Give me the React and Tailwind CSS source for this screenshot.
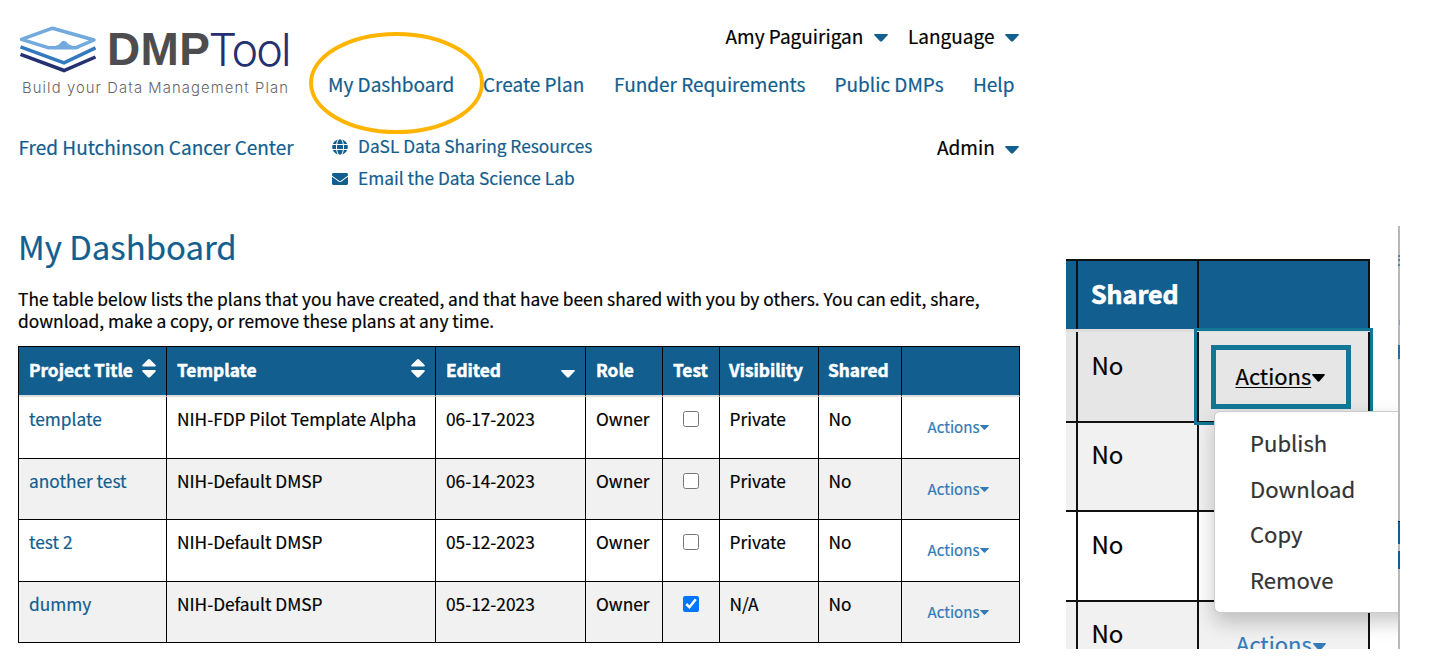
import React from "react";
import { FaGlobe, FaEnvelope } from "react-icons/fa";

function Caret({ className }) {
  return (
    <svg viewBox="0 0 14 9" preserveAspectRatio="none" className={className} fill="currentColor">
      <path d="M.8 0H13.2Q14.3.4 13.6 1.5L8 8.2Q7 9.2 6 8.2L.4 1.5Q-.3.4.8 0Z" />
    </svg>
  );
}

function Sort() {
  return (
    <svg viewBox="0 0 14 19" className="mt-px h-[19px] w-[14px] shrink-0" fill="currentColor">
      <path d="M7 0Q7.5 0 8 .5L13.6 6Q14.2 7.5 13 7.5H1Q-.2 7.5.4 6L6 .5Q6.500 0 7 0ZM1 11H13Q14.200 11 13.600 12.500L8 18.300Q7 19.200 6 18.300L.4 12.500Q-.2 11 1 11Z" />
    </svg>
  );
}

function Logo() {
  return (
    <div className="h-[90px] w-[310px] pt-[14px] pl-[19px]">
      <div className="flex h-[50px]">
        <svg viewBox="0 0 78 48" className="h-[48px] w-[78px] shrink-0" fill="none">
          <path d="M1.500 28.300 45 44.500 76.500 31" stroke="#24306f" strokeWidth="3.500" />
          <path d="M1.500 20.800 45 36.800 76.500 21.800" stroke="#3478bf" strokeWidth="3.500" />
          <path d="M2.500 13.300 33.500 2.200 75 14 57 21.700H29Z" stroke="#72aadd" strokeWidth="3.500" strokeLinejoin="round" />
          <path d="M27 22.500Q35 21 40 18.500 45 11 49.500 18.300 53 19.500 60 22.500V23H28Z" fill="#72aadd" />
        </svg>
        <div className="flex pl-[10px] text-[45px] leading-[47px] whitespace-nowrap">
          <span className="w-[101.500px] font-['Liberation_Sans',sans-serif] text-[46px] font-bold tracking-[0.300px] text-[#4d4d4f]">DMP</span>
          <span className="font-[Inter,sans-serif] font-light tracking-[-2px] text-[#24306f]">Tool</span>
        </div>
      </div>
      <div className="mt-[3px] pl-[3px] font-[Inter,sans-serif] text-[14.800px] font-light leading-[18px] tracking-[1.100px] whitespace-nowrap text-[#666666]">
        Build your Data Management Plan
      </div>
    </div>
  );
}

const plans = [
  ["template", "NIH-FDP Pilot Template Alpha", "06-17-2023", false, "Private", "h-[62px]"],
  ["another test", "NIH-Default DMSP", "06-14-2023", false, "Private", "h-[61px] bg-[#f1f1f1]"],
  ["test 2", "NIH-Default DMSP", "05-12-2023", false, "Private", "h-[62px]"],
  ["dummy", "NIH-Default DMSP", "05-12-2023", true, "N/A", "h-[61px] bg-[#f1f1f1]"],
];

const th = "border-r border-b-2 border-r-black border-b-[#dddddd] p-0 pl-[10px] pt-[11px] align-top text-left font-bold [-webkit-text-stroke:0.5px]";
const td = "border-r border-b border-black p-0 pl-[10px] pt-[10px] align-top";
const tdTight = "border-r border-b border-black p-0 pl-[9.500px] pt-[10px] align-top";

function PlansTable() {
  return (
    <table className="w-[1002px] table-fixed border-separate border-spacing-0 border-t border-l border-black text-[17.300px] leading-[24px] whitespace-nowrap">
      <colgroup>
        <col className="w-[148px]" />
        <col className="w-[269px]" />
        <col className="w-[150px]" />
        <col className="w-[77px]" />
        <col className="w-[57px]" />
        <col className="w-[99px]" />
        <col className="w-[83px]" />
        <col className="w-[118px]" />
      </colgroup>
      <thead className="bg-[#115e8f] text-white">
        <tr className="h-[50px]">
          <th className={th}>
            <div className="flex justify-between pr-[10px]">Project Title<Sort /></div>
          </th>
          <th className={th}>
            <div className="flex justify-between pr-[10px]">Template<Sort /></div>
          </th>
          <th className={th}>
            <div className="flex justify-between pr-[10px]">Edited<Caret className="mt-[12px] h-[8px] w-[14px]" /></div>
          </th>
          <th className={th}>Role</th>
          <th className={th}>Test</th>
          <th className={th}><span className="-ml-px">Visibility</span></th>
          <th className={th}><span className="-ml-px">Shared</span></th>
          <th className={th}></th>
        </tr>
      </thead>
      <tbody>
        {plans.map(([title, template, edited, test, visibility, row]) => (
          <tr key={title} className={row}>
            <td className={td}><a className="text-[#115e8f]">{title}</a></td>
            <td className={td}>{template}</td>
            <td className={td}>{edited}</td>
            <td className={td}>Owner</td>
            <td className="border-r border-b border-black p-0 pl-[20px] pt-[14px] align-top">
              <input type="checkbox" defaultChecked={test} className="block h-[16px] w-[16px]" />
            </td>
            <td className={tdTight}>{visibility}</td>
            <td className={tdTight}>No</td>
            <td className="border-r border-b border-black p-0 pl-[25.500px] pt-[17px] align-top text-[15.100px] text-[#337ab7]">
              <div className="flex items-center">Actions<Caret className="mt-[3px] ml-px h-[5px] w-[9px]" /></div>
            </td>
          </tr>
        ))}
      </tbody>
    </table>
  );
}

const cell = "border-r-2 border-b-2 border-[#111111] shrink-0";

function Detail() {
  return (
    <div className="relative mt-[226px] ml-[46px] flex h-[423px] w-[334px] shrink-0 overflow-hidden text-[24px] leading-[32px] [-webkit-text-stroke:0.2px]">
      <div className="flex w-[304px] shrink-0 flex-col pt-[33px]">
        <div className="flex h-[73px] shrink-0 border-t-2 border-b-[3px] border-t-[#111111] border-b-[#dddddd] bg-[#115e8f] font-bold text-white">
          <div className="w-[12px] border-r-2 border-[#111111]"></div>
          <div className="w-[121px] border-r-2 border-[#111111] pt-[16px] pl-[13px] text-[25px] [-webkit-text-stroke:0.7px]">Shared</div>
          <div className="w-[171px] border-r-2 border-[#111111]"></div>
        </div>
        <div className="flex h-[91px] shrink-0 bg-[#e6e6e6]">
          <div className={cell + " w-[12px]"}></div>
          <div className={cell + " w-[121px] pt-[17px] pl-[13.500px]"}>No</div>
          <div className={cell + " w-[171px]"}></div>
        </div>
        <div className="flex h-[89px] shrink-0 bg-[#f1f1f1]">
          <div className={cell + " w-[12px]"}></div>
          <div className={cell + " w-[121px] pt-[15px] pl-[13.500px]"}>No</div>
          <div className={cell + " w-[171px]"}></div>
        </div>
        <div className="flex h-[90px] shrink-0">
          <div className={cell + " w-[12px]"}></div>
          <div className={cell + " w-[121px] pt-[16px] pl-[13.500px]"}>No</div>
          <div className={cell + " w-[171px]"}></div>
        </div>
        <div className="flex h-[90px] shrink-0 bg-[#f1f1f1]">
          <div className={cell + " w-[12px]"}></div>
          <div className={cell + " w-[121px] pt-[15px] pl-[13.500px]"}>No</div>
          <div className={cell + " flex w-[171px] pt-[25px] pl-[37px] text-[22px] text-[#337ab7]"}>
            Actions<Caret className="mt-[16px] ml-px h-[8px] w-[13px]" />
          </div>
        </div>
      </div>
      <div className="absolute top-[102px] left-[128px] h-[97px] w-[179px] border-[3px] border-[#127796]"></div>
      <div className="absolute top-[119px] left-[145px] flex h-[64px] w-[140px] border-[5px] border-[#127796] pt-[9px] pl-[19.500px] text-[22px]">
        <span className="h-[27px] leading-[32px] underline decoration-1 underline-offset-[2px]">Actions</span>
        <Caret className="mt-[15px] ml-px h-[8px] w-[13px]" />
      </div>
      <div className="absolute top-[185px] left-[148px] h-[202px] w-[220px] rounded-[6px] border border-black/20 bg-white pt-[8px] pl-[35px] text-[22.100px] leading-[45.600px] text-[#333333] shadow-[0_9px_20px_rgba(0,0,0,0.22)]">
        <div>Publish</div>
        <div>Download</div>
        <div>Copy</div>
        <div>Remove</div>
      </div>
      <div className="absolute top-0 right-0 flex h-[423px] w-[2px] flex-col bg-[#b8b8b8]">
        <div className="mt-[29px] h-[2px] shrink-0 bg-[#4f86a9]"></div>
        <div className="mt-[2px] h-[2px] shrink-0 bg-[#4f86a9]"></div>
        <div className="mt-[3px] h-[2px] shrink-0 bg-[#4f86a9]"></div>
        <div className="mt-[54px] ml-px h-[5px] shrink-0 bg-[#7fa3ba]"></div>
        <div className="mt-[20px] h-[14px] shrink-0 bg-[#2c6c97]"></div>
        <div className="mt-[162px] h-[1px] shrink-0 bg-[#111111]"></div>
        <div className="h-[22px] shrink-0 bg-[#115e8f]"></div>
        <div className="mt-[7px] h-[18px] shrink-0 bg-[#115e8f]"></div>
      </div>
    </div>
  );
}

export default function App() {
  return (
    <div className="flex h-[666px] w-[1431px] overflow-hidden bg-white font-['Noto_Sans_CJK_SC',sans-serif] text-black">
      <div className="relative w-[1020px] shrink-0">
        <header className="flex pt-[12px]">
          <Logo />
          <div className="w-[710px] text-[19px] leading-[28px] whitespace-nowrap [-webkit-text-stroke:0.2px]">
            <div className="flex pt-[10px] pl-[415.500px]">
              <span className="w-[148.500px]">Amy Paguirigan</span>
              <Caret className="mt-[12px] h-[8px] w-[14px] text-[#115e8f]" />
              <span className="ml-[20px] w-[97px]">Language</span>
              <Caret className="mt-[12px] h-[8px] w-[14px] text-[#115e8f]" />
            </div>
            <nav className="mt-[20px] flex pl-[18px] text-[#115e8f]">
              <a className="w-[155px]">My Dashboard</a>
              <a className="w-[131px]">Create Plan</a>
              <a className="w-[220.500px]">Funder Requirements</a>
              <a className="w-[138.500px]">Public DMPs</a>
              <a>Help</a>
            </nav>
          </div>
        </header>
        <div className="flex h-[96px] pt-[31px] pl-[18.500px] text-[19px] leading-[28px] whitespace-nowrap [-webkit-text-stroke:0.2px]">
          <a className="w-[313.500px] text-[#115e8f]">Fred Hutchinson Cancer Center</a>
          <div className="w-[605px] text-[17.300px] leading-[32px] text-[#115e8f]">
            <div className="-mt-[3px] flex items-center gap-[10px]"><FaGlobe className="mt-[2px] h-[16px] w-[16px]" />DaSL Data Sharing Resources</div>
            <div className="flex items-center gap-[10px]"><FaEnvelope className="mt-[2px] h-[16px] w-[16px]" />Email the Data Science Lab</div>
          </div>
          <span className="w-[68px]">Admin</span>
          <Caret className="mt-[13px] h-[8px] w-[14px] text-[#115e8f]" />
        </div>
        <main className="pl-[18px] [-webkit-text-stroke:0.2px]">
          <h1 className="pt-[26px] text-[32.900px] leading-[44px] text-[#115e8f]">My Dashboard</h1>
          <div className="mt-[20px] text-[17.330px] leading-[22px] whitespace-nowrap">
            <p>The table below lists the plans that you have created, and that have been shared with you by others. You can edit, share,</p>
            <p>download, make a copy, or remove these plans at any time.</p>
          </div>
          <div className="mt-[14px]">
            <PlansTable />
          </div>
        </main>
        <svg viewBox="0 0 176 102" className="absolute top-[32px] left-[308px] h-[102px] w-[176px]" fill="none">
          <ellipse cx="88.500" cy="51" rx="85.500" ry="49" stroke="#ffb400" strokeWidth="4" />
        </svg>
      </div>
      <Detail />
    </div>
  );
}
